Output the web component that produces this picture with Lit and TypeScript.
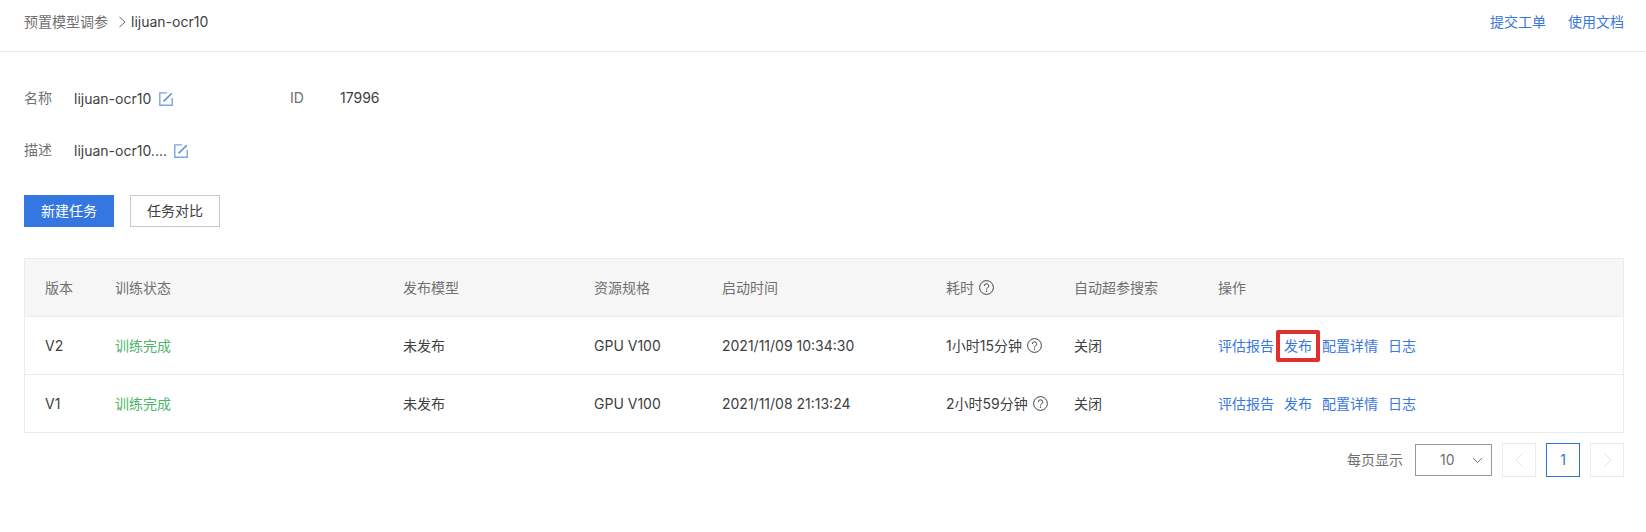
import { LitElement, html, css, svg } from "lit";
import { customElement } from "lit/decorators.js";

const edit = html`<svg class="edit" viewBox="0 0 14 14" fill="none"><path d="M8 .9H.8v12.3h12.4V6" stroke="#7aa5ea" stroke-width="1.4"/><path d="M4.6 9.4 12.8 1.2" stroke="#5a90e8" stroke-width="1.6"/></svg>`;
const help = html`<svg class="help" viewBox="0 0 15 15" fill="none"><circle cx="7.5" cy="7.5" r="6.9" stroke="#444" stroke-width="1"/><path d="M5.3 6a2.2 2.2 0 1 1 3.3 1.9c-.8.5-1.1.8-1.1 1.7" stroke="#444" stroke-width="1"/><circle cx="7.5" cy="11.3" r=".7" fill="#444"/></svg>`;
const rows = [
  { v: "V2", time: "2021/11/09 10:34:30", dur: "1小时15分钟", mark: true },
  { v: "V1", time: "2021/11/08 21:13:24", dur: "2小时59分钟", mark: false },
];

@customElement("app-root")
export class AppRoot extends LitElement {
  static styles = css`
    :host { display: block; height: 532px; background: #fff; color: #404040; font: 14px/20px Inter, "Liberation Sans", "Noto Sans CJK SC", sans-serif; overflow: hidden; }
    a { color: #3a78e0; }
    .top { height: 52px; box-sizing: border-box; border-bottom: 1px solid #ebebeb; padding: 12px 22px 0 24px; display: flex; justify-content: space-between; }
    .crumbs { display: flex; align-items: flex-start; }
    .crumbs .p { color: #707070; }
    .crumbs svg { width: 9px; height: 12px; margin: 4px 4px 0 10px; }
    .links { display: flex; gap: 22px; }
    .info { padding: 36px 24px 0; }
    .line { display: flex; height: 20px; margin-bottom: 32px; }
    .lab { width: 50px; color: #707070; }
    .val { display: flex; align-items: center; gap: 7px; margin-top: 1px; }
    .f1 { width: 216px; gap: 8px; }
    .id { width: 50px; color: #707070; }
    .edit { width: 14px; height: 14px; }
    .btns { display: flex; gap: 16px; margin: 35px 24px 0; }
    .btn { height: 32px; width: 90px; box-sizing: border-box; display: flex; align-items: center; justify-content: center; border: 1px solid #c8c8c8; }
    .btn.pri { background: #3577e0; border-color: #3577e0; color: #fff; }
    .tbl { margin: 31px 22px 0 24px; border: 1px solid #ebebeb; }
    .row { display: grid; grid-template-columns: 70px 288px 191px 128px 224px 128px 144px 1fr; height: 58px; align-items: center; padding-left: 20px; border-top: 1px solid #ebebeb; box-sizing: border-box; }
    .row.head { background: #f6f6f6; color: #707070; border-top: 0; height: 57px; }
    .cell { display: flex; align-items: center; gap: 5px; }
    .help { width: 15px; height: 15px; }
    .ok { color: #4db56a; }
    .ops { display: flex; gap: 10px; }
    .ops a { position: relative; }
    .mark { position: absolute; left: -8px; right: -8px; top: -6px; bottom: -6px; border: 4px solid #e0302d; border-radius: 2px; }
    .pager { display: flex; justify-content: flex-end; align-items: center; margin: 10px 22px 0 0; height: 34px; color: #707070; }
    .sel { width: 77px; height: 32px; box-sizing: border-box; border: 1px solid #999; margin: 0 10px 0 12px; display: flex; align-items: center; padding: 0 8px 0 24px; justify-content: space-between; }
    .sel svg { width: 11px; height: 7px; }
    .pg { width: 34px; height: 34px; box-sizing: border-box; border: 1px solid #ebebeb; display: flex; align-items: center; justify-content: center; }
    .pg + .pg { margin-left: 10px; }
    .pg svg { width: 9px; height: 16px; }
    .pg.on { border-color: #2f72e0; color: #2f72e0; }
  `;
  render() {
    const chev = (d: string, c: string) => svg`<path d=${d} stroke=${c} fill="none" stroke-width="1"/>`;
    return html`
      <div class="top">
        <div class="crumbs"><span class="p">预置模型调参</span><svg viewBox="0 0 9 12">${chev("M1.5 1 7 6l-5.5 5", "#666")}</svg><span>lijuan-ocr10</span></div>
        <div class="links"><a>提交工单</a><a>使用文档</a></div>
      </div>
      <div class="info">
        <div class="line"><span class="lab">名称</span><span class="val f1">lijuan-ocr10 ${edit}</span><span class="id">ID</span><span>17996</span></div>
        <div class="line"><span class="lab">描述</span><span class="val">lijuan-ocr10.... ${edit}</span></div>
      </div>
      <div class="btns"><div class="btn pri">新建任务</div><div class="btn">任务对比</div></div>
      <div class="tbl">
        <div class="row head"><span>版本</span><span>训练状态</span><span>发布模型</span><span>资源规格</span><span>启动时间</span><span class="cell">耗时 ${help}</span><span>自动超参搜索</span><span>操作</span></div>
        ${rows.map(r => html`<div class="row"><span>${r.v}</span><span class="ok">训练完成</span><span>未发布</span><span>GPU V100</span><span>${r.time}</span><span class="cell">${r.dur} ${help}</span><span>关闭</span>
          <span class="ops"><a>评估报告</a><a>发布${r.mark ? html`<span class="mark"></span>` : ""}</a><a>配置详情</a><a>日志</a></span></div>`)}
      </div>
      <div class="pager"><span>每页显示</span>
        <div class="sel"><span>10</span><svg viewBox="0 0 11 7">${chev("M1 1l4.5 4.5L10 1", "#777")}</svg></div>
        <div class="pg"><svg viewBox="0 0 9 16">${chev("M8 1 1 8l7 7", "#e6e6e6")}</svg></div>
        <div class="pg on">1</div>
        <div class="pg"><svg viewBox="0 0 9 16">${chev("M1 1l7 7-7 7", "#e6e6e6")}</svg></div>
      </div>`;
  }
}
